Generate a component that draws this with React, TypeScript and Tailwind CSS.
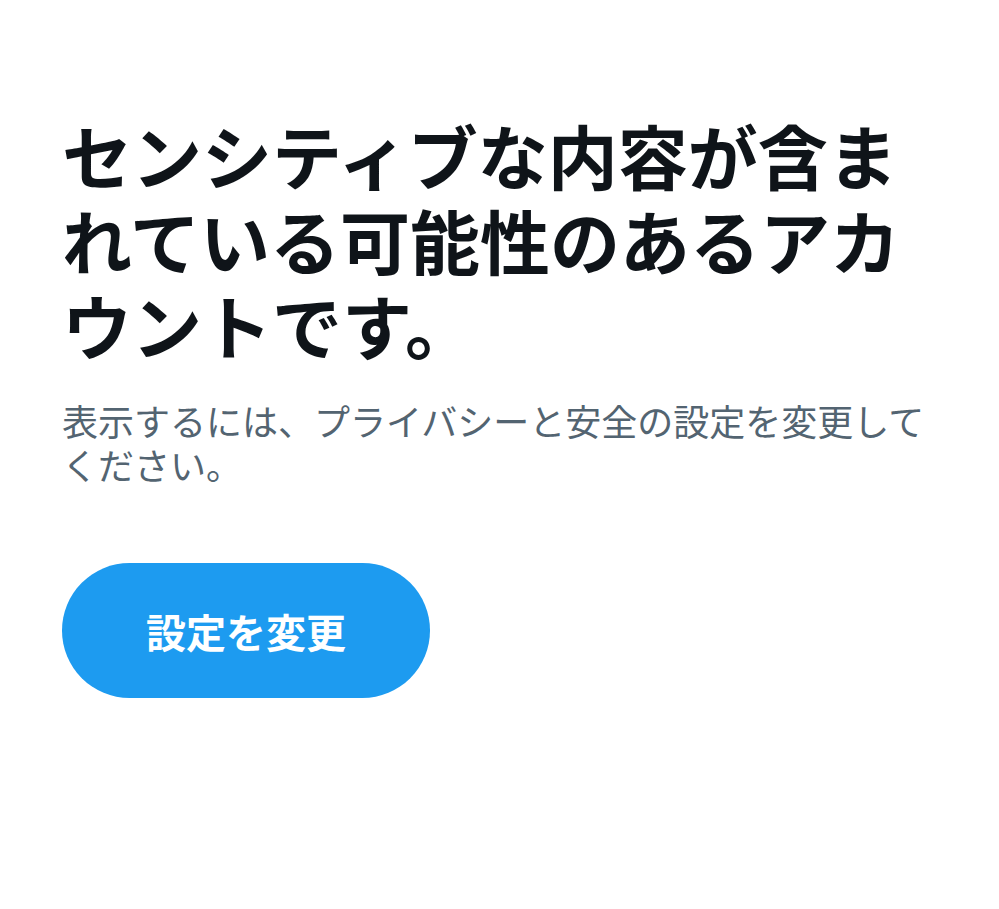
import React from 'react';

export default function App() {
  return (
    <div
      className="min-h-[909px] w-[999px] bg-white"
      style={{ fontFamily: '"Noto Sans CJK JP", "Noto Sans", sans-serif' }}
    >
      <div className="flex flex-col items-start px-[62px] pt-[112px]">
        {/* Title */}
        <h1 className="w-[875px] text-[70px] font-bold leading-[85px] text-[#0f1419]">
          センシティブな内容が含まれている可能性のあるアカウントです。
        </h1>

        {/* Description */}
        <p className="mt-[31px] w-[875px] text-[36px] leading-[44px] text-[#536471]">
          表示するには、プライバシーと安全の設定を変更してください。
        </p>

        {/* Action */}
        <button className="mt-[77px] flex h-[135px] w-[368px] items-center justify-center rounded-full bg-[#1d9bf0] text-[40px] font-bold text-white">
          設定を変更
        </button>
      </div>
    </div>
  );
}
